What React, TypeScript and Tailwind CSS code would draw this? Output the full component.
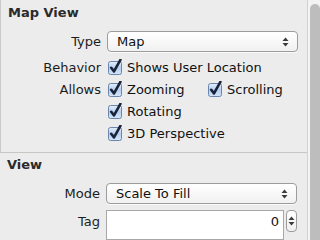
import type { ReactNode } from "react";

function CheckBox() {
  return (
    <svg width="16" height="16" viewBox="0 0 16 16" className="shrink-0">
      <defs>
        <linearGradient id="cbfill" x1="0" y1="0" x2="0" y2="1">
          <stop offset="0" stopColor="#e4eefb" />
          <stop offset="0.5" stopColor="#b5cff0" />
          <stop offset="1" stopColor="#d6e6fa" />
        </linearGradient>
      </defs>
      <rect x="1.5" y="2.5" width="13" height="13" rx="2" fill="url(#cbfill)" stroke="#6b86ac" />
      <path d="M4.2 8.8 L7 12.4 L13.4 0.8" fill="none" stroke="#19233a" strokeWidth="2.6" strokeLinecap="round" strokeLinejoin="round" />
    </svg>
  );
}

function Arrows() {
  return (
    <svg width="7" height="10" viewBox="0 0 7 10">
      <path d="M3.5 0.5 L6.5 4 L0.5 4 Z" fill="#3a3a3a" />
      <path d="M3.5 9.5 L6.5 6 L0.5 6 Z" fill="#3a3a3a" />
    </svg>
  );
}

function PopUp({ value }: { value: string }) {
  return (
    <div className="flex h-[21px] w-[191px] items-center justify-between rounded-[4px] border border-[#9c9c9c] bg-gradient-to-b from-white to-[#f1f1f1] pl-[9px] pr-[8px] shadow-[0_1px_0_rgba(255,255,255,0.7)]">
      <span className="text-[#111]">{value}</span>
      <Arrows />
    </div>
  );
}

function Row({ label, children, h = "h-[22px]" }: { label?: string; children: ReactNode; h?: string }) {
  return (
    <div className={`flex items-center ${h}`}>
      <div className="w-[100px] text-right text-[#1c1c1c]">{label}</div>
      <div className="ml-[6px] flex items-center">{children}</div>
    </div>
  );
}

function Check({ text, w }: { text: string; w?: string }) {
  return (
    <div className={`flex items-center gap-[4px] ${w ?? ""}`}>
      <CheckBox />
      <span className="text-[#111]">{text}</span>
    </div>
  );
}

export default function App() {
  return (
    <div
      className="flex h-[240px] w-[320px] overflow-hidden bg-[#ececec] text-[13px] leading-[15px]"
      style={{ fontFamily: '"DejaVu Sans", "Liberation Sans", sans-serif' }}
    >
      <div className="flex w-[307px] flex-col">
        <div className="h-[161px] border-l border-[#c9c9c9]">
          <div className="pl-[7px] pt-[5px] font-bold text-[#2a2a2a]">Map View</div>
          <div className="mt-[11px]">
            <Row label="Type" h="h-[21px]">
              <PopUp value="Map" />
            </Row>
          </div>
          <div className="mt-[4px]">
            <Row label="Behavior">
              <Check text="Shows User Location" />
            </Row>
            <Row label="Allows">
              <Check text="Zooming" w="w-[100px]" />
              <Check text="Scrolling" />
            </Row>
            <Row>
              <Check text="Rotating" />
            </Row>
            <Row>
              <Check text="3D Perspective" />
            </Row>
          </div>
        </div>
        <div className="h-px bg-[#c6c6c6]" />
        <div className="flex-1">
          <div className="pl-[7px] pt-[4px] font-bold text-[#2a2a2a]">View</div>
          <div className="mt-[11px]">
            <Row label="Mode" h="h-[21px]">
              <PopUp value="Scale To Fill" />
            </Row>
          </div>
          <div className="mt-[6px] flex h-[30px]">
            <div className="w-[100px] pt-[4px] text-right text-[#1c1c1c]">Tag</div>
            <div className="ml-[6px] flex h-full w-[178px] justify-end border border-[#a8a8a8] bg-white pr-[4px] pt-[3px] text-[#111]">
              0
            </div>
            <div className="ml-[2px] flex h-[22px] w-[11px] flex-col items-center justify-center rounded-[4px] border border-[#9c9c9c] bg-gradient-to-b from-white to-[#f0f0f0]">
              <Arrows />
            </div>
          </div>
        </div>
      </div>
      <div className="flex w-[13px] border-l border-[#d2d2d2] bg-[#f3f3f3]">
        <div className="ml-[2px] mt-[4px] w-[10px] rounded-t-full bg-[#bdbdbd]" />
      </div>
    </div>
  );
}
